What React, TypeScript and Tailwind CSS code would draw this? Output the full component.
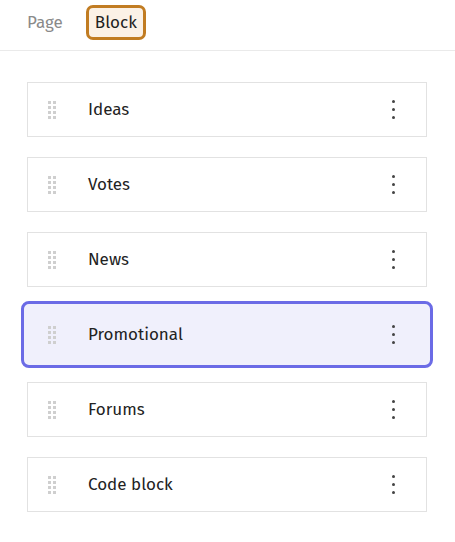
const blocks = ["Ideas", "Votes", "News", "Promotional", "Forums", "Code block"];

function DragHandle() {
  return (
    <div className="grid grid-cols-2 gap-[2px]">
      {Array.from({ length: 8 }).map((_, i) => (
        <span key={i} className="h-[3px] w-[3px] bg-[#cfcfcf]" />
      ))}
    </div>
  );
}

function Kebab() {
  return (
    <div className="flex flex-col items-center gap-[5px] px-2">
      <span className="h-[3px] w-[3px] rounded-full bg-[#444]" />
      <span className="h-[3px] w-[3px] rounded-full bg-[#444]" />
      <span className="h-[3px] w-[3px] rounded-full bg-[#444]" />
    </div>
  );
}

export default function App() {
  const selected = "Promotional";
  return (
    <div className="min-h-screen bg-white text-[#222]" style={{ fontFamily: '"Fira Sans", "Open Sans", "Noto Sans", sans-serif' }}>
      <div className="flex h-[51px] items-start gap-[23px] border-b border-[#eaeaea] pl-[27px] pt-[5px]">
        <button className="mt-[6px] text-[17px] leading-[23px] text-[#8a8a8a]">Page</button>
        <button className="rounded-[7px] border-[3px] border-[#c17c22] bg-[#fbf1e6] px-[6px] py-[3px] text-[17px] leading-[23px] text-[#1f1f1f]">
          Block
        </button>
      </div>
      <div className="flex flex-col gap-[20px] pl-[27px] pr-[28px] pt-[31px]">
        {blocks.map((name) => {
          const isSel = name === selected;
          return (
            <div
              key={name}
              className={
                isSel
                  ? "relative z-0 flex h-[55px] items-center border border-[#d6d6e6] bg-[#f0f0fc] pl-[20px] pr-[23px] before:absolute before:-inset-[7px] before:-z-10 before:rounded-[8px] before:border-[3px] before:border-[#6b6be6] before:bg-[#f0f0fc] before:content-['']"
                  : "flex h-[55px] items-center border border-[#e2e2e2] bg-white pl-[20px] pr-[23px]"
              }
            >
              <DragHandle />
              <span className="ml-[32px] flex-1 text-[17px]">{name}</span>
              <Kebab />
            </div>
          );
        })}
      </div>
    </div>
  );
}
